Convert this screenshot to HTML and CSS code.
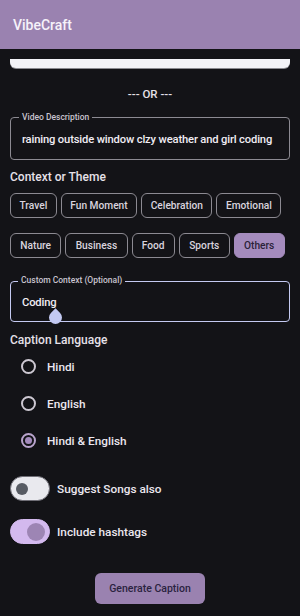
FILE: index.html
```html
<!DOCTYPE html>
<html>
<head>
<meta charset="utf-8">
<link rel="stylesheet" href="styles.css">
</head>
<body>
<header class="topbar"><span class="title">VibeCraft</span></header>
<main class="content">
  <div class="cut-card"></div>
  <div class="or">--- OR ---</div>

  <div class="field">
    <span class="field-label">Video Description</span>
    <span class="field-text">raining outside window clzy weather and girl coding</span>
  </div>

  <div class="section-title first">Context or Theme</div>
  <div class="chips">
    <span class="chip">Travel</span>
    <span class="chip">Fun Moment</span>
    <span class="chip">Celebration</span>
    <span class="chip">Emotional</span>
  </div>
  <div class="chips second">
    <span class="chip">Nature</span>
    <span class="chip">Business</span>
    <span class="chip">Food</span>
    <span class="chip">Sports</span>
    <span class="chip selected">Others</span>
  </div>

  <div class="field focused">
    <span class="field-label">Custom Context (Optional)</span>
    <span class="field-text">Coding</span>
    <span class="handle"></span>
  </div>

  <div class="section-title">Caption Language</div>
  <div class="radios">
    <div class="radio-row"><span class="radio"></span><span class="opt">Hindi</span></div>
    <div class="radio-row"><span class="radio"></span><span class="opt">English</span></div>
    <div class="radio-row"><span class="radio checked"></span><span class="opt">Hindi &amp; English</span></div>
  </div>

  <div class="toggles">
    <div class="toggle-row"><span class="switch"><span class="thumb"></span></span><span class="opt">Suggest Songs also</span></div>
    <div class="toggle-row"><span class="switch on"><span class="thumb"></span></span><span class="opt">Include hashtags</span></div>
  </div>

  <div class="actions"><button class="generate">Generate Caption</button></div>
</main>
</body>
</html>
```
FILE: styles.css
```css
* { box-sizing: border-box; }
html, body { margin: 0; padding: 0; }
body {
  width: 300px;
  height: 616px;
  overflow: hidden;
  background: #131317;
  color: #e6e1e9;
  font-family: Roboto, "Noto Sans", sans-serif;
}
.topbar {
  height: 49px;
  background: #9a82b0;
  display: flex;
  align-items: center;
  padding-left: 13px;
}
.title {
  font-size: 14px;
  font-weight: 500;
  color: #f6f2fa;
}
.content {
  padding: 0 10px;
}
.cut-card {
  margin-top: 10px;
  height: 9px;
  background: #f3f3f7;
  border-radius: 0 0 6px 6px;
  box-shadow: 0 1px 0 #8a8a90;
}
.or {
  margin-top: 18px;
  height: 16px;
  line-height: 16px;
  text-align: center;
  font-size: 11.5px;
  font-weight: 500;
  color: #e6e1e9;
}
.field {
  position: relative;
  margin-top: 15px;
  height: 43px;
  border: 1px solid #8c8a92;
  border-radius: 4px;
  display: flex;
  align-items: center;
  padding-left: 11px;
}
.field-label {
  position: absolute;
  top: -6px;
  left: 8px;
  padding: 0 3px;
  background: #131317;
  font-size: 8.5px;
  line-height: 11px;
  font-weight: 500;
  color: #c9c4cf;
}
.field-text {
  font-size: 11.2px;
  letter-spacing: -0.15px;
  white-space: nowrap;
  font-weight: 500;
  color: #f1edf4;
  padding-top: 2px;
}
.section-title {
  margin-top: 10px;
  height: 16px;
  line-height: 16px;
  font-size: 12px;
  font-weight: 500;
  color: #e6e1e9;
}
.section-title.first { margin-top: 9px; }
.chips {
  margin-top: 8px;
  display: flex;
  gap: 4px;
}
.chips.second { margin-top: 15px; }
.chip {
  height: 25px;
  padding: 0 8.5px;
  border: 1px solid #8c8a92;
  border-radius: 6px;
  display: flex;
  align-items: center;
  font-size: 10.2px;
  font-weight: 500;
  color: #d9d4de;
}
.chips.second .chip { padding: 0 9.3px; }
.chip.selected {
  background: #a48bbd;
  border-color: #a48bbd;
  color: #2a2238;
}
.field.focused {
  margin-top: 23px;
  height: 41px;
  border: 1.5px solid #c5caf2;
}
.field.focused .field-label { top: -7px; left: 7px; }
.handle {
  position: absolute;
  left: 38px;
  top: 29px;
  width: 13px;
  height: 13px;
  background: #c3c9f3;
  border-radius: 0 50% 50% 50%;
  transform: rotate(45deg);
}
.radio-row {
  height: 37px;
  display: flex;
  align-items: center;
  padding-left: 11px;
}
.radio {
  width: 15px;
  height: 15px;
  border: 2px solid #cdc8d2;
  border-radius: 50%;
  display: flex;
  align-items: center;
  justify-content: center;
  margin-right: 11px;
}
.radio.checked { border-color: #b9a4cd; }
.radio.checked::after {
  content: "";
  width: 7px;
  height: 7px;
  border-radius: 50%;
  background: #a48bbd;
}
.opt {
  font-size: 11.8px;
  font-weight: 500;
  color: #ebe7ef;
}
.toggles { margin-top: 8px; }
.toggle-row {
  height: 43px;
  display: flex;
  align-items: center;
}
.switch {
  width: 40px;
  height: 25px;
  border-radius: 13px;
  background: #e9e9ee;
  border: 1.5px solid #6f6e76;
  display: flex;
  align-items: center;
  padding-left: 5px;
  margin-right: 7px;
}
.switch .thumb {
  width: 12px;
  height: 12px;
  border-radius: 50%;
  background: #575b63;
}
.switch.on {
  background: #d3b9ee;
  border-color: #d3b9ee;
  padding-left: 16px;
}
.switch.on .thumb {
  width: 18px;
  height: 18px;
  background: #9d85b4;
}
.actions {
  margin-top: 20px;
  display: flex;
  justify-content: center;
}
.generate {
  width: 110px;
  height: 31px;
  border: none;
  border-radius: 6px;
  background: #9a82b0;
  color: #2a2340;
  font-family: Roboto, "Noto Sans", sans-serif;
  font-size: 10.5px;
  font-weight: 500;
  padding: 0;
}
```
